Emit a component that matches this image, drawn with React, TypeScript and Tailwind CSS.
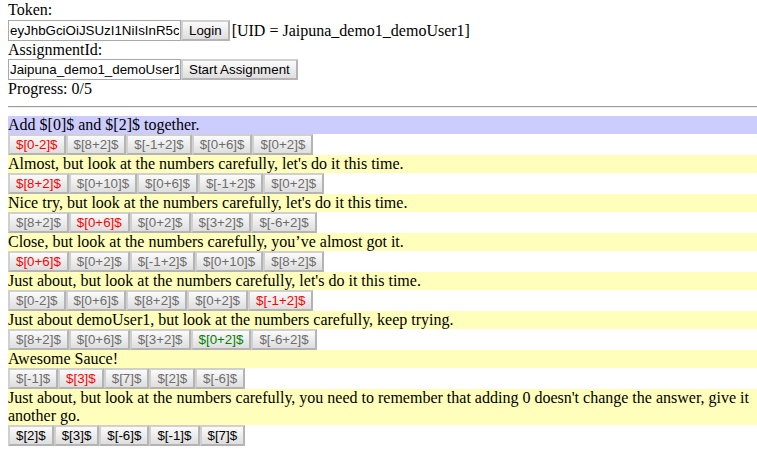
import React from "react";

type Btn = { t: string; c?: "red" | "green" | "grey" | "black" };
type Row = { text: string; bg: string; btns: Btn[] };

const g = (t: string): Btn => ({ t, c: "grey" });
const r = (t: string): Btn => ({ t, c: "red" });

const rows: Row[] = [
  { text: "Add $[0]$ and $[2]$ together.", bg: "blue", btns: [r("$[0-2]$"), g("$[8+2]$"), g("$[-1+2]$"), g("$[0+6]$"), g("$[0+2]$")] },
  { text: "Almost, but look at the numbers carefully, let's do it this time.", bg: "yellow", btns: [r("$[8+2]$"), g("$[0+10]$"), g("$[0+6]$"), g("$[-1+2]$"), g("$[0+2]$")] },
  { text: "Nice try, but look at the numbers carefully, let's do it this time.", bg: "yellow", btns: [g("$[8+2]$"), r("$[0+6]$"), g("$[0+2]$"), g("$[3+2]$"), g("$[-6+2]$")] },
  { text: "Close, but look at the numbers carefully, you\u2019ve almost got it.", bg: "yellow", btns: [r("$[0+6]$"), g("$[0+2]$"), g("$[-1+2]$"), g("$[0+10]$"), g("$[8+2]$")] },
  { text: "Just about, but look at the numbers carefully, let's do it this time.", bg: "yellow", btns: [g("$[0-2]$"), g("$[0+6]$"), g("$[8+2]$"), g("$[0+2]$"), r("$[-1+2]$")] },
  { text: "Just about demoUser1, but look at the numbers carefully, keep trying.", bg: "yellow", btns: [g("$[8+2]$"), g("$[0+6]$"), g("$[3+2]$"), { t: "$[0+2]$", c: "green" }, g("$[-6+2]$")] },
  { text: "Awesome Sauce!", bg: "yellow", btns: [g("$[-1]$"), r("$[3]$"), g("$[7]$"), g("$[2]$"), g("$[-6]$")] },
  { text: "Just about, but look at the numbers carefully, you need to remember that adding 0 doesn't change the answer, give it another go.", bg: "yellow", btns: [{ t: "$[2]$", c: "black" }, { t: "$[3]$", c: "black" }, { t: "$[-6]$", c: "black" }, { t: "$[-1]$", c: "black" }, { t: "$[7]$", c: "black" }] },
];

function Button({ label, color }: { label: string; color: string }) {
  const cls =
    color === "red"
      ? "text-[#ff0000]"
      : color === "green"
      ? "text-[#008000]"
      : color === "black"
      ? "text-black"
      : "text-[#6d6d6d]";
  return (
    <button
      className={`h-[21px] px-[6px] border-2 border-[#b4b4b4] border-t-[#d0d0d0] border-l-[#d0d0d0] bg-linear-to-b from-[#fbfbfb] to-[#dedede] font-['Liberation_Sans',Arial,sans-serif] text-[13.33px] leading-[15px] whitespace-nowrap ${cls}`}
    >
      {label}
    </button>
  );
}

function Input({ value }: { value: string }) {
  return (
    <input
      readOnly
      value={value}
      className="w-[173px] h-[21px] px-[1px] border border-[#a9a9a9] bg-white text-black font-['Liberation_Sans',Arial,sans-serif] text-[13.33px] leading-[15px] outline-none"
    />
  );
}

export default function App() {
  return (
    <div className="pl-2 bg-white min-h-[463px] font-['Liberation_Serif','Times_New_Roman',serif] text-[16px] leading-[18px] text-black">
      <div className="h-[20px] pt-[1px]">Token:</div>
      <div className="flex items-center h-[21px]">
        <Input value="eyJhbGciOiJSUzI1NiIsInR5cCI6IkpXVCJ9.eyJ1aWQiOiJKYWlwdW5hX2RlbW8xX2RlbW9Vc2VyMSJ9" />
        <Button label="Login" color="black" />
        <span className="ml-[2px]">[UID = Jaipuna_demo1_demoUser1]</span>
      </div>
      <div className="h-[18px]">AssignmentId:</div>
      <div className="flex items-center h-[21px]">
        <Input value="Jaipuna_demo1_demoUser1" />
        <Button label="Start Assignment" color="black" />
      </div>
      <div className="h-[18px]">Progress: 0/5</div>
      <div className="pt-[8px] pb-[8px]">
        <div className="border-t border-t-[#9a9a9a] border-b border-b-[#eeeeee]" />
      </div>
      {rows.map((row, i) => (
        <div key={i}>
          <div className={row.bg === "blue" ? "bg-[#ccccff]" : "bg-[#ffffbb]"}>{row.text}</div>
          <div className="flex h-[21px]">
            {row.btns.map((b, j) => (
              <Button key={j} label={b.t} color={b.c || "grey"} />
            ))}
          </div>
        </div>
      ))}
    </div>
  );
}
